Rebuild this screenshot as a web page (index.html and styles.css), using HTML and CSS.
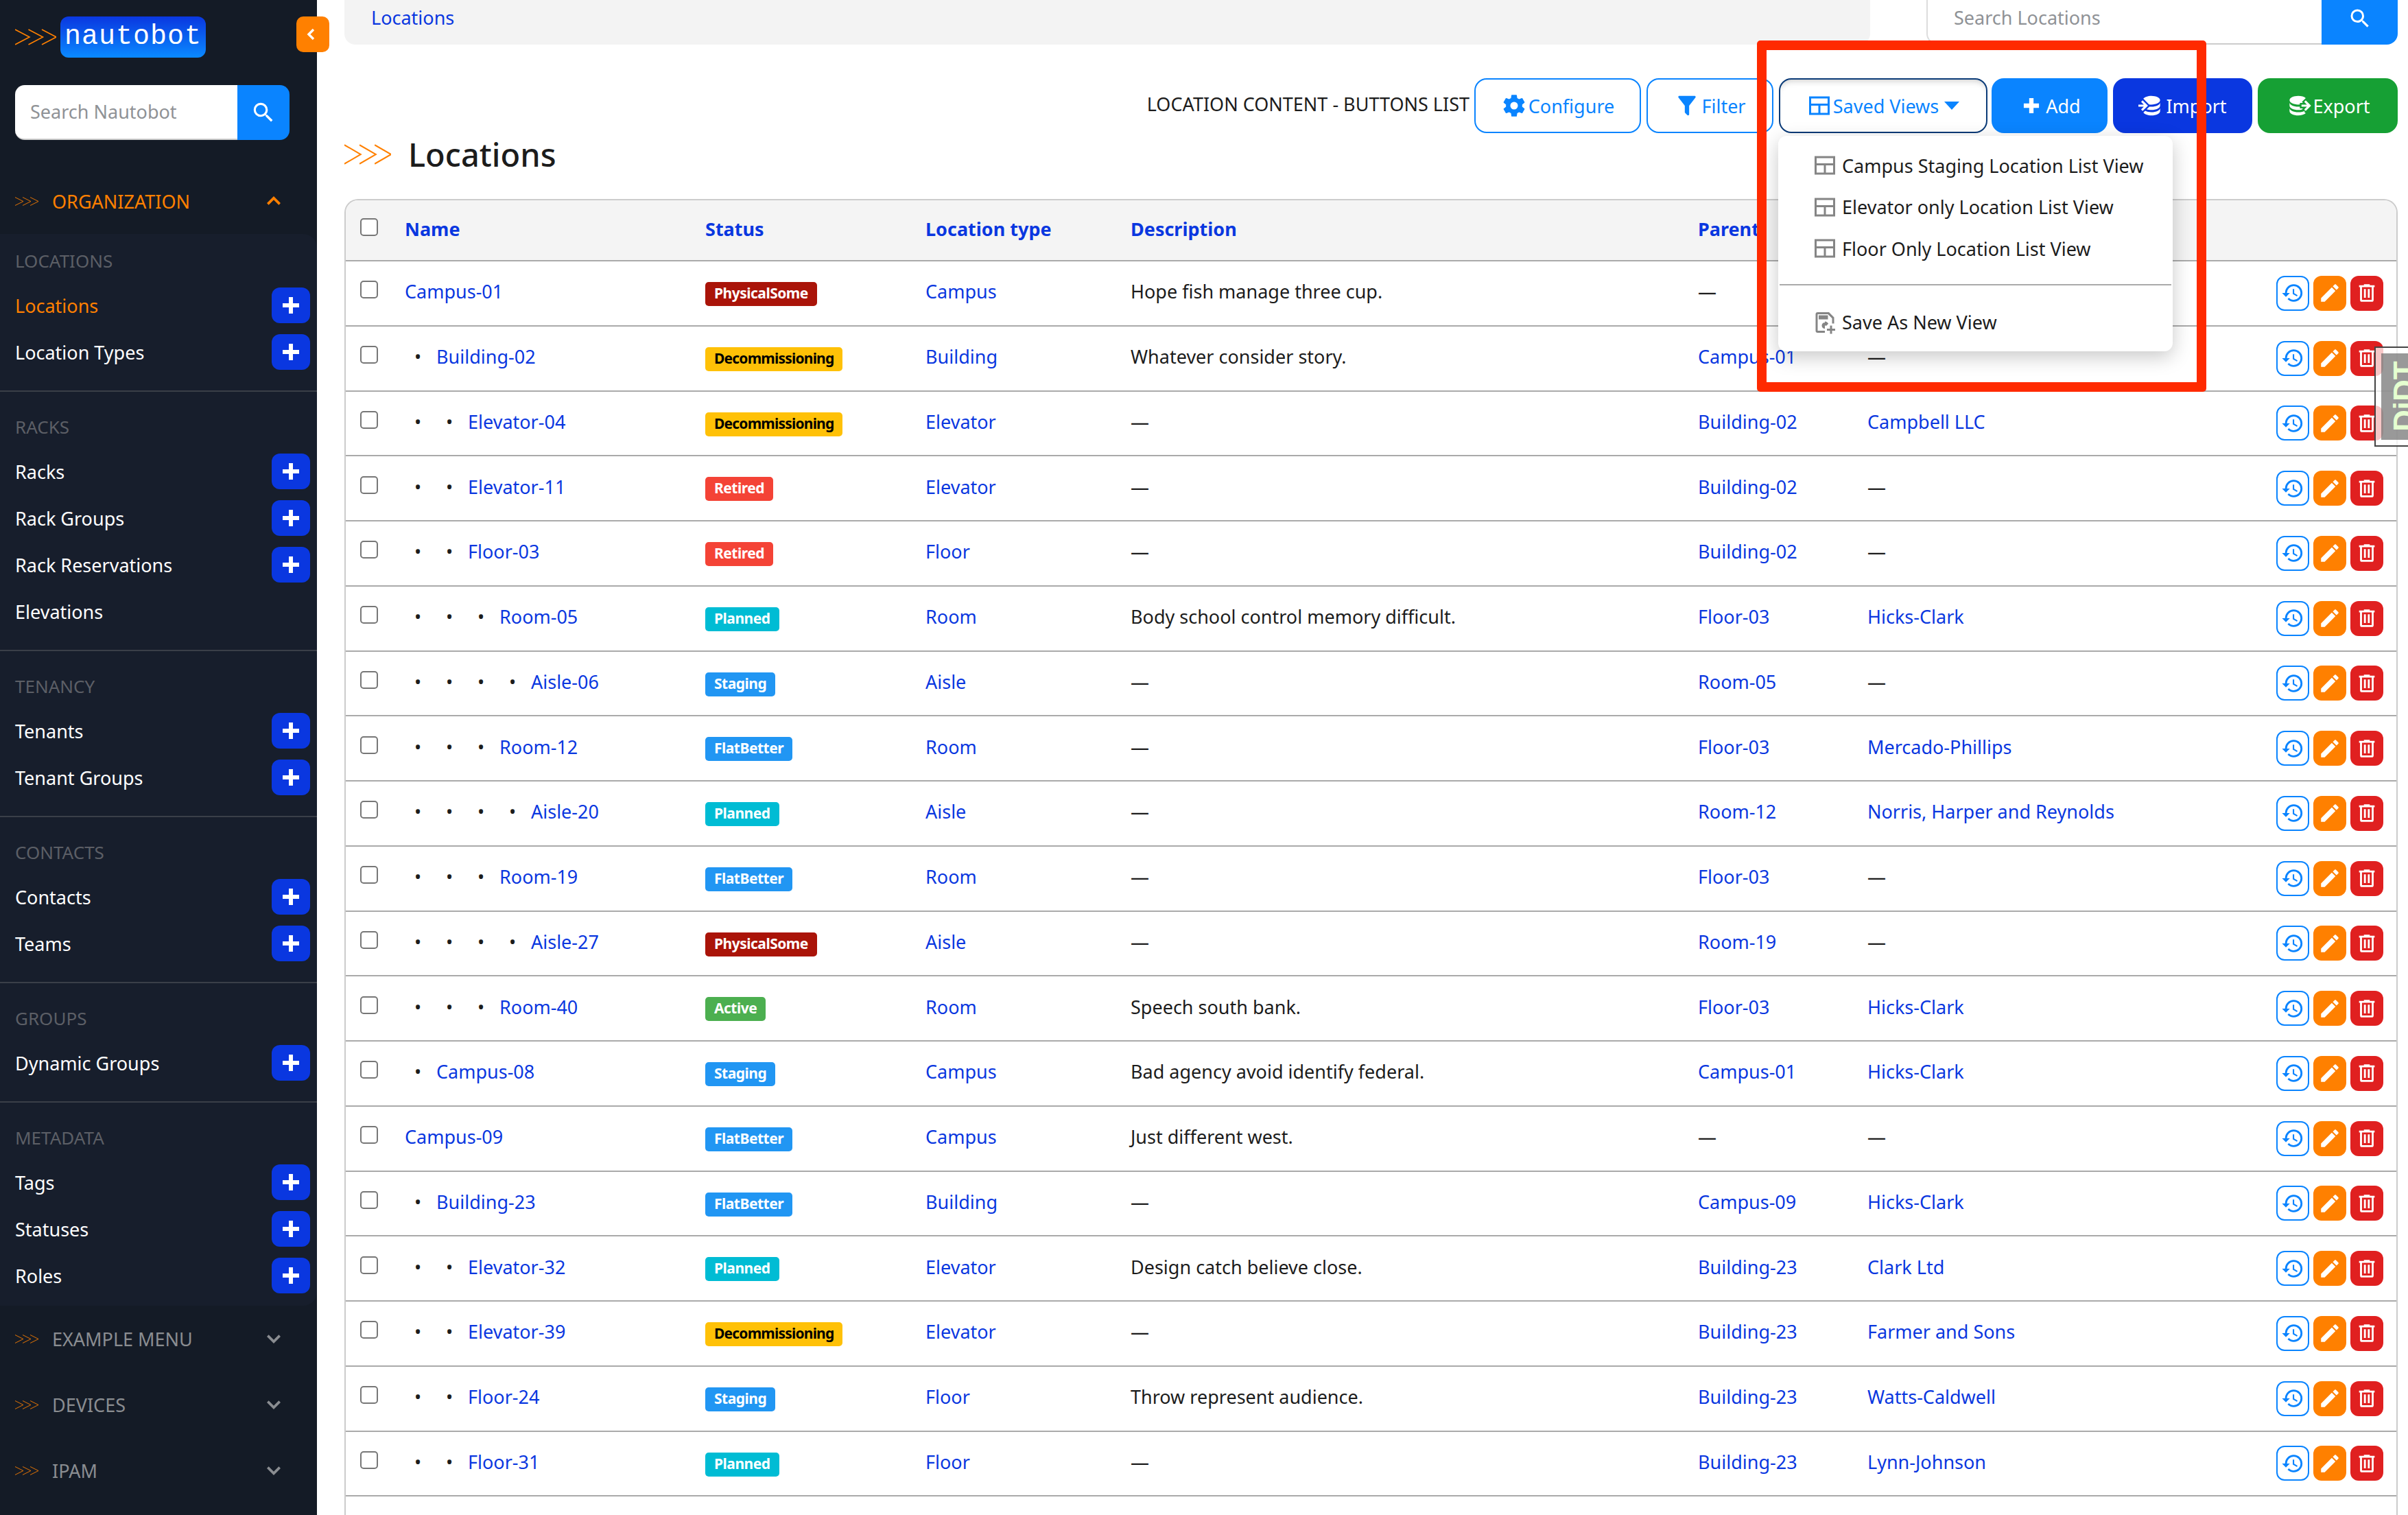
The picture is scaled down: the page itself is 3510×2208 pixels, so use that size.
FILE: index.html
```html
<!DOCTYPE html>
<html lang="en">
<head>
<meta charset="UTF-8">
<title>Locations - Nautobot</title>
<link rel="stylesheet" href="styles.css">
</head>
<body>
<svg class="defs" width="0" height="0">
  <symbol id="i-chev" viewBox="0 0 60 24" preserveAspectRatio="none"><path d="M0 1 21 12 0 23M19.5 1 40.5 12 19.5 23M39 1 60 12 39 23" fill="none" stroke="currentColor" stroke-width="1.6"/></symbol>
  <symbol id="i-plus" viewBox="0 0 24 24"><path d="M20 14H14V20H10V14H4V10H10V4H14V10H20V14Z"/></symbol>
  <symbol id="i-plain-plus" viewBox="0 0 24 24"><path d="M19 14H14V19H10V14H5V10H10V5H14V10H19V14Z"/></symbol>
  <symbol id="i-search" viewBox="0 0 24 24"><path d="M9.5 3A6.5 6.5 0 0 1 16 9.5C16 11.11 15.41 12.59 14.44 13.73L14.71 14H15.5L20.5 19L19 20.5L14 15.5V14.71L13.73 14.44C12.59 15.41 11.11 16 9.5 16A6.5 6.5 0 0 1 3 9.5A6.5 6.5 0 0 1 9.5 3M9.5 5C7 5 5 7 5 9.5S7 14 9.5 14 14 12 14 9.5 12 5 9.5 5Z"/></symbol>
  <symbol id="i-history" viewBox="0 0 24 24"><path d="M13.5,8H12V13L16.28,15.54L17,14.33L13.5,12.25V8M13,3A9,9 0 0,0 4,12H1L4.96,16.03L9,12H6A7,7 0 0,1 13,5A7,7 0 0,1 20,12A7,7 0 0,1 13,19C11.07,19 9.32,18.21 8.06,16.94L6.64,18.36C8.27,20 10.5,21 13,21A9,9 0 0,0 22,12A9,9 0 0,0 13,3"/></symbol>
  <symbol id="i-pencil" viewBox="0 0 24 24"><path d="M20.71,7.04C21.1,6.65 21.1,6 20.71,5.63L18.37,3.29C18,2.9 17.35,2.9 16.96,3.29L15.12,5.12L18.87,8.87M3,17.25V21H6.75L17.81,9.93L14.06,6.18L3,17.25Z"/></symbol>
  <symbol id="i-trash" viewBox="0 0 24 24"><path d="M9,3V4H4V6H5V19A2,2 0 0,0 7,21H17A2,2 0 0,0 19,19V6H20V4H15V3H9M7,6H17V19H7V6M9,8V17H11V8H9M13,8V17H15V8H13Z"/></symbol>
  <symbol id="i-cog" viewBox="0 0 24 24"><path d="M12,15.5A3.5,3.5 0 0,1 8.5,12A3.5,3.5 0 0,1 12,8.5A3.5,3.5 0 0,1 15.5,12A3.5,3.5 0 0,1 12,15.5M19.43,12.97C19.47,12.65 19.5,12.33 19.5,12C19.5,11.67 19.47,11.34 19.43,11L21.54,9.37C21.73,9.22 21.78,8.95 21.66,8.73L19.66,5.27C19.54,5.05 19.27,4.96 19.05,5.05L16.56,6.05C16.04,5.66 15.5,5.32 14.87,5.07L14.5,2.42C14.46,2.18 14.25,2 14,2H10C9.75,2 9.54,2.18 9.5,2.42L9.13,5.07C8.5,5.32 7.96,5.66 7.44,6.05L4.95,5.05C4.73,4.96 4.46,5.05 4.34,5.27L2.34,8.73C2.21,8.95 2.27,9.22 2.46,9.37L4.57,11C4.53,11.34 4.5,11.67 4.5,12C4.5,12.33 4.53,12.65 4.57,12.97L2.46,14.63C2.27,14.78 2.21,15.05 2.34,15.27L4.34,18.73C4.46,18.95 4.73,19.03 4.95,18.95L7.44,17.94C7.96,18.34 8.5,18.68 9.13,18.93L9.5,21.58C9.54,21.82 9.75,22 10,22H14C14.25,22 14.46,21.82 14.5,21.58L14.87,18.93C15.5,18.67 16.04,18.34 16.56,17.94L19.05,18.95C19.27,19.03 19.54,18.95 19.66,18.73L21.66,15.27C21.78,15.05 21.73,14.78 21.54,14.63L19.43,12.97Z"/></symbol>
  <symbol id="i-filter" viewBox="0 0 24 24"><path d="M14,12V19.88C14.04,20.18 13.94,20.5 13.71,20.71C13.32,21.1 12.69,21.1 12.3,20.71L10.29,18.7C10.06,18.47 9.96,18.16 10,17.87V12H9.97L4.21,4.62C3.87,4.19 3.95,3.56 4.38,3.22C4.57,3.08 4.78,3 5,3H19C19.22,3 19.43,3.08 19.62,3.22C20.05,3.56 20.13,4.19 19.79,4.62L14.03,12H14Z"/></symbol>
  <symbol id="i-table" viewBox="0 0 24 24"><path d="M2 3H22V21H2V3M4 5V10H20V5H4M4 12V19H11V12H4M13 12V19H20V12H13Z"/></symbol>
  <symbol id="i-import" viewBox="0 0 24 24"><path d="M12,3C8.59,3 5.69,4.07 4.54,5.57L9.79,10.82C10.5,10.93 11.22,11 12,11C16.42,11 20,9.21 20,7C20,4.79 16.42,3 12,3M3.92,7.08L2.5,8.5L5,11H0V13H5L2.5,15.5L3.92,16.92L8.84,12M20,9C20,11.21 16.42,13 12,13C11.34,13 10.7,12.95 10.09,12.87L7.62,15.34C8.88,15.75 10.38,16 12,16C16.42,16 20,14.21 20,12M20,14C20,16.21 16.42,18 12,18C9.72,18 7.67,17.5 6.21,16.75L4.63,18.33C5.72,19.89 8.6,21 12,21C16.42,21 20,19.21 20,17"/></symbol>
  <symbol id="i-export" viewBox="0 0 24 24"><path d="M12,3C7.58,3 4,4.79 4,7C4,9.21 7.58,11 12,11C12.5,11 13,10.97 13.5,10.92V9.5H16.39L15.39,8.5L18.9,5C17.5,3.8 14.94,3 12,3M18.92,7.08L17.5,8.5L20,11H15V13H20L17.5,15.5L18.92,16.92L23.84,12M4,9V12C4,14.21 7.58,16 12,16C13.17,16 14.26,15.85 15.25,15.62L16.38,14.5H13.5V12.92C13,12.97 12.5,13 12,13C7.58,13 4,11.21 4,9M4,14V17C4,19.21 7.58,21 12,21C14.94,21 17.5,20.2 18.9,19L17.5,17.61L18.3,16.5C16.9,17.5 14.6,18 12,18C7.58,18 4,16.21 4,14Z"/></symbol>
  <symbol id="i-save" viewBox="0 0 24 24"><path d="M5 2H16L21 7V13H19V8L15 4H5V20H12V22H5A2 2 0 0 1 3 20V4A2 2 0 0 1 5 2M6 5H15V9H6V5M12 11A4 4 0 0 1 15.4 13.2L13.5 15.2A2 2 0 0 0 12 15V11M9 15A3 3 0 0 1 12 12V18A3 3 0 0 1 9 15M17 15H19V18H22V20H19V23H17V20H14V18H17V15Z"/></symbol>
</svg>

<aside class="sidebar">
  <div class="brand">
    <svg class="brand-chev"><use href="#i-chev"/></svg>
    <span class="logo">nautobot</span>
  </div>
  <a class="collapse"><svg viewBox="0 0 24 24"><path d="M15 5 8 12l7 7" fill="none" stroke="#fff" stroke-width="3.4"/></svg></a>
  <div class="side-search">
    <span class="side-search-input">Search Nautobot</span>
    <span class="side-search-btn"><svg><use href="#i-search"/></svg></span>
  </div>

  <div class="menu-head open">
    <svg class="menu-chev"><use href="#i-chev"/></svg>
    <span>ORGANIZATION</span>
    <svg class="caret" viewBox="0 0 24 24"><path d="M4 16 12 8l8 8" fill="none" stroke="currentColor" stroke-width="3.4"/></svg>
  </div>
  <div class="submenu">
    <section class="group">
      <h6>LOCATIONS</h6>
      <div class="item current">Locations<a class="add"><svg><use href="#i-plus"/></svg></a></div>
      <div class="item">Location Types<a class="add"><svg><use href="#i-plus"/></svg></a></div>
    </section>
    <section class="group">
      <h6>RACKS</h6>
      <div class="item">Racks<a class="add"><svg><use href="#i-plus"/></svg></a></div>
      <div class="item">Rack Groups<a class="add"><svg><use href="#i-plus"/></svg></a></div>
      <div class="item">Rack Reservations<a class="add"><svg><use href="#i-plus"/></svg></a></div>
      <div class="item">Elevations</div>
    </section>
    <section class="group">
      <h6>TENANCY</h6>
      <div class="item">Tenants<a class="add"><svg><use href="#i-plus"/></svg></a></div>
      <div class="item">Tenant Groups<a class="add"><svg><use href="#i-plus"/></svg></a></div>
    </section>
    <section class="group">
      <h6>CONTACTS</h6>
      <div class="item">Contacts<a class="add"><svg><use href="#i-plus"/></svg></a></div>
      <div class="item">Teams<a class="add"><svg><use href="#i-plus"/></svg></a></div>
    </section>
    <section class="group">
      <h6>GROUPS</h6>
      <div class="item">Dynamic Groups<a class="add"><svg><use href="#i-plus"/></svg></a></div>
    </section>
    <section class="group">
      <h6>METADATA</h6>
      <div class="item">Tags<a class="add"><svg><use href="#i-plus"/></svg></a></div>
      <div class="item">Statuses<a class="add"><svg><use href="#i-plus"/></svg></a></div>
      <div class="item">Roles<a class="add"><svg><use href="#i-plus"/></svg></a></div>
    </section>
  </div>
  <div class="menu-head">
    <svg class="menu-chev"><use href="#i-chev"/></svg>
    <span>EXAMPLE MENU</span>
    <svg class="caret" viewBox="0 0 24 24"><path d="M4 8l8 8 8-8" fill="none" stroke="currentColor" stroke-width="3.4"/></svg>
  </div>
  <div class="menu-head">
    <svg class="menu-chev"><use href="#i-chev"/></svg>
    <span>DEVICES</span>
    <svg class="caret" viewBox="0 0 24 24"><path d="M4 8l8 8 8-8" fill="none" stroke="currentColor" stroke-width="3.4"/></svg>
  </div>
  <div class="menu-head">
    <svg class="menu-chev"><use href="#i-chev"/></svg>
    <span>IPAM</span>
    <svg class="caret" viewBox="0 0 24 24"><path d="M4 8l8 8 8-8" fill="none" stroke="currentColor" stroke-width="3.4"/></svg>
  </div>
</aside>

<main class="main">
  <div class="topbar">
    <div class="crumbs"><a>Locations</a></div>
    <div class="top-search">
      <span class="top-search-input">Search Locations</span>
      <span class="top-search-btn"><svg><use href="#i-search"/></svg></span>
    </div>
  </div>

  <div class="toolbar">
    <span class="toolbar-label">LOCATION CONTENT - BUTTONS LIST</span>
    <a class="btn outline w-configure"><svg><use href="#i-cog"/></svg>Configure</a>
    <a class="btn outline w-filter"><svg><use href="#i-filter"/></svg>Filter</a>
    <a class="btn outline selected w-saved"><svg class="small"><use href="#i-table"/></svg>Saved Views<i class="tri"></i></a>
    <a class="btn blue w-add"><svg><use href="#i-plain-plus"/></svg>Add</a>
    <a class="btn navy w-import"><svg><use href="#i-import"/></svg>Import</a>
    <a class="btn green w-export"><svg><use href="#i-export"/></svg>Export</a>
  </div>

  <h1 class="title"><svg><use href="#i-chev"/></svg>Locations</h1>

  <div class="table-wrap">
    <table class="list">
      <colgroup><col class="c-check"><col class="c-name"><col class="c-status"><col class="c-type"><col class="c-desc"><col class="c-parent"><col class="c-tenant"><col></colgroup>
      <thead>
        <tr><th class="check"><i class="box"></i></th><th>Name</th><th>Status</th><th>Location type</th><th>Description</th><th>Parent</th><th></th><th></th></tr>
      </thead>
      <tbody>
        <tr><td class="check"><i class="box"></i></td><td><a>Campus-01</a></td><td class="st"><span class="badge physical">PhysicalSome</span></td><td><a>Campus</a></td><td>Hope fish manage three cup.</td><td>—</td><td></td><td class="acts"><a class="act hist"><svg><use href="#i-history"/></svg></a><a class="act edit"><svg><use href="#i-pencil"/></svg></a><a class="act del"><svg><use href="#i-trash"/></svg></a></td></tr>
        <tr><td class="check"><i class="box"></i></td><td><span class="dot">•</span><a>Building-02</a></td><td class="st"><span class="badge decom">Decommissioning</span></td><td><a>Building</a></td><td>Whatever consider story.</td><td><a>Campus-01</a></td><td>—</td><td class="acts"><a class="act hist"><svg><use href="#i-history"/></svg></a><a class="act edit"><svg><use href="#i-pencil"/></svg></a><a class="act del"><svg><use href="#i-trash"/></svg></a></td></tr>
        <tr><td class="check"><i class="box"></i></td><td><span class="dot">•</span><span class="dot">•</span><a>Elevator-04</a></td><td class="st"><span class="badge decom">Decommissioning</span></td><td><a>Elevator</a></td><td>—</td><td><a>Building-02</a></td><td><a>Campbell LLC</a></td><td class="acts"><a class="act hist"><svg><use href="#i-history"/></svg></a><a class="act edit"><svg><use href="#i-pencil"/></svg></a><a class="act del"><svg><use href="#i-trash"/></svg></a></td></tr>
        <tr><td class="check"><i class="box"></i></td><td><span class="dot">•</span><span class="dot">•</span><a>Elevator-11</a></td><td class="st"><span class="badge retired">Retired</span></td><td><a>Elevator</a></td><td>—</td><td><a>Building-02</a></td><td>—</td><td class="acts"><a class="act hist"><svg><use href="#i-history"/></svg></a><a class="act edit"><svg><use href="#i-pencil"/></svg></a><a class="act del"><svg><use href="#i-trash"/></svg></a></td></tr>
        <tr><td class="check"><i class="box"></i></td><td><span class="dot">•</span><span class="dot">•</span><a>Floor-03</a></td><td class="st"><span class="badge retired">Retired</span></td><td><a>Floor</a></td><td>—</td><td><a>Building-02</a></td><td>—</td><td class="acts"><a class="act hist"><svg><use href="#i-history"/></svg></a><a class="act edit"><svg><use href="#i-pencil"/></svg></a><a class="act del"><svg><use href="#i-trash"/></svg></a></td></tr>
        <tr><td class="check"><i class="box"></i></td><td><span class="dot">•</span><span class="dot">•</span><span class="dot">•</span><a>Room-05</a></td><td class="st"><span class="badge planned">Planned</span></td><td><a>Room</a></td><td>Body school control memory difficult.</td><td><a>Floor-03</a></td><td><a>Hicks-Clark</a></td><td class="acts"><a class="act hist"><svg><use href="#i-history"/></svg></a><a class="act edit"><svg><use href="#i-pencil"/></svg></a><a class="act del"><svg><use href="#i-trash"/></svg></a></td></tr>
        <tr><td class="check"><i class="box"></i></td><td><span class="dot">•</span><span class="dot">•</span><span class="dot">•</span><span class="dot">•</span><a>Aisle-06</a></td><td class="st"><span class="badge staging">Staging</span></td><td><a>Aisle</a></td><td>—</td><td><a>Room-05</a></td><td>—</td><td class="acts"><a class="act hist"><svg><use href="#i-history"/></svg></a><a class="act edit"><svg><use href="#i-pencil"/></svg></a><a class="act del"><svg><use href="#i-trash"/></svg></a></td></tr>
        <tr><td class="check"><i class="box"></i></td><td><span class="dot">•</span><span class="dot">•</span><span class="dot">•</span><a>Room-12</a></td><td class="st"><span class="badge flat">FlatBetter</span></td><td><a>Room</a></td><td>—</td><td><a>Floor-03</a></td><td><a>Mercado-Phillips</a></td><td class="acts"><a class="act hist"><svg><use href="#i-history"/></svg></a><a class="act edit"><svg><use href="#i-pencil"/></svg></a><a class="act del"><svg><use href="#i-trash"/></svg></a></td></tr>
        <tr><td class="check"><i class="box"></i></td><td><span class="dot">•</span><span class="dot">•</span><span class="dot">•</span><span class="dot">•</span><a>Aisle-20</a></td><td class="st"><span class="badge planned">Planned</span></td><td><a>Aisle</a></td><td>—</td><td><a>Room-12</a></td><td><a>Norris, Harper and Reynolds</a></td><td class="acts"><a class="act hist"><svg><use href="#i-history"/></svg></a><a class="act edit"><svg><use href="#i-pencil"/></svg></a><a class="act del"><svg><use href="#i-trash"/></svg></a></td></tr>
        <tr><td class="check"><i class="box"></i></td><td><span class="dot">•</span><span class="dot">•</span><span class="dot">•</span><a>Room-19</a></td><td class="st"><span class="badge flat">FlatBetter</span></td><td><a>Room</a></td><td>—</td><td><a>Floor-03</a></td><td>—</td><td class="acts"><a class="act hist"><svg><use href="#i-history"/></svg></a><a class="act edit"><svg><use href="#i-pencil"/></svg></a><a class="act del"><svg><use href="#i-trash"/></svg></a></td></tr>
        <tr><td class="check"><i class="box"></i></td><td><span class="dot">•</span><span class="dot">•</span><span class="dot">•</span><span class="dot">•</span><a>Aisle-27</a></td><td class="st"><span class="badge physical">PhysicalSome</span></td><td><a>Aisle</a></td><td>—</td><td><a>Room-19</a></td><td>—</td><td class="acts"><a class="act hist"><svg><use href="#i-history"/></svg></a><a class="act edit"><svg><use href="#i-pencil"/></svg></a><a class="act del"><svg><use href="#i-trash"/></svg></a></td></tr>
        <tr><td class="check"><i class="box"></i></td><td><span class="dot">•</span><span class="dot">•</span><span class="dot">•</span><a>Room-40</a></td><td class="st"><span class="badge active">Active</span></td><td><a>Room</a></td><td>Speech south bank.</td><td><a>Floor-03</a></td><td><a>Hicks-Clark</a></td><td class="acts"><a class="act hist"><svg><use href="#i-history"/></svg></a><a class="act edit"><svg><use href="#i-pencil"/></svg></a><a class="act del"><svg><use href="#i-trash"/></svg></a></td></tr>
        <tr><td class="check"><i class="box"></i></td><td><span class="dot">•</span><a>Campus-08</a></td><td class="st"><span class="badge staging">Staging</span></td><td><a>Campus</a></td><td>Bad agency avoid identify federal.</td><td><a>Campus-01</a></td><td><a>Hicks-Clark</a></td><td class="acts"><a class="act hist"><svg><use href="#i-history"/></svg></a><a class="act edit"><svg><use href="#i-pencil"/></svg></a><a class="act del"><svg><use href="#i-trash"/></svg></a></td></tr>
        <tr><td class="check"><i class="box"></i></td><td><a>Campus-09</a></td><td class="st"><span class="badge flat">FlatBetter</span></td><td><a>Campus</a></td><td>Just different west.</td><td>—</td><td>—</td><td class="acts"><a class="act hist"><svg><use href="#i-history"/></svg></a><a class="act edit"><svg><use href="#i-pencil"/></svg></a><a class="act del"><svg><use href="#i-trash"/></svg></a></td></tr>
        <tr><td class="check"><i class="box"></i></td><td><span class="dot">•</span><a>Building-23</a></td><td class="st"><span class="badge flat">FlatBetter</span></td><td><a>Building</a></td><td>—</td><td><a>Campus-09</a></td><td><a>Hicks-Clark</a></td><td class="acts"><a class="act hist"><svg><use href="#i-history"/></svg></a><a class="act edit"><svg><use href="#i-pencil"/></svg></a><a class="act del"><svg><use href="#i-trash"/></svg></a></td></tr>
        <tr><td class="check"><i class="box"></i></td><td><span class="dot">•</span><span class="dot">•</span><a>Elevator-32</a></td><td class="st"><span class="badge planned">Planned</span></td><td><a>Elevator</a></td><td>Design catch believe close.</td><td><a>Building-23</a></td><td><a>Clark Ltd</a></td><td class="acts"><a class="act hist"><svg><use href="#i-history"/></svg></a><a class="act edit"><svg><use href="#i-pencil"/></svg></a><a class="act del"><svg><use href="#i-trash"/></svg></a></td></tr>
        <tr><td class="check"><i class="box"></i></td><td><span class="dot">•</span><span class="dot">•</span><a>Elevator-39</a></td><td class="st"><span class="badge decom">Decommissioning</span></td><td><a>Elevator</a></td><td>—</td><td><a>Building-23</a></td><td><a>Farmer and Sons</a></td><td class="acts"><a class="act hist"><svg><use href="#i-history"/></svg></a><a class="act edit"><svg><use href="#i-pencil"/></svg></a><a class="act del"><svg><use href="#i-trash"/></svg></a></td></tr>
        <tr><td class="check"><i class="box"></i></td><td><span class="dot">•</span><span class="dot">•</span><a>Floor-24</a></td><td class="st"><span class="badge staging">Staging</span></td><td><a>Floor</a></td><td>Throw represent audience.</td><td><a>Building-23</a></td><td><a>Watts-Caldwell</a></td><td class="acts"><a class="act hist"><svg><use href="#i-history"/></svg></a><a class="act edit"><svg><use href="#i-pencil"/></svg></a><a class="act del"><svg><use href="#i-trash"/></svg></a></td></tr>
        <tr><td class="check"><i class="box"></i></td><td><span class="dot">•</span><span class="dot">•</span><a>Floor-31</a></td><td class="st"><span class="badge planned">Planned</span></td><td><a>Floor</a></td><td>—</td><td><a>Building-23</a></td><td><a>Lynn-Johnson</a></td><td class="acts"><a class="act hist"><svg><use href="#i-history"/></svg></a><a class="act edit"><svg><use href="#i-pencil"/></svg></a><a class="act del"><svg><use href="#i-trash"/></svg></a></td></tr>
        <tr><td colspan="8"></td></tr>
      </tbody>
    </table>
  </div>
</main>

<div class="dropdown">
  <a class="drop-item"><svg><use href="#i-table"/></svg>Campus Staging Location List View</a>
  <a class="drop-item"><svg><use href="#i-table"/></svg>Elevator only Location List View</a>
  <a class="drop-item"><svg><use href="#i-table"/></svg>Floor Only Location List View</a>
  <hr>
  <a class="drop-item"><svg><use href="#i-save"/></svg>Save As New View</a>
</div>
<div class="annotation"></div>
<div class="djdt"><span>DjDT</span></div>
</body>
</html>
```

FILE: styles.css
```css
* { box-sizing: border-box; }
html, body { height: 100%; }
body { margin: 0; display: flex; height: 2208px; overflow: hidden; position: relative; background: #fff; color: #1c1c1c; font-family: "Noto Sans", "Open Sans", sans-serif; font-size: 27px; }
a { color: #0a37e0; text-decoration: none; }
svg { fill: currentColor; }
.defs { position: absolute; }

/* sidebar */
.sidebar { width: 462px; height: 2208px; flex: none; background: #141b26; color: #fff; }
.brand { display: flex; align-items: center; height: 60px; margin: 24px 0 0 22px; }
.brand-chev { width: 60px; height: 24px; color: #ff8000; margin-right: 6px; }
.logo { width: 212px; height: 60px; border-radius: 12px; background: linear-gradient(#0a37e0, #0a8aff); color: #fff; text-align: center; font-family: "Liberation Mono", monospace; font-size: 40px; letter-spacing: 1px; line-height: 60px; }
.collapse { position: absolute; left: 432px; top: 24px; width: 48px; height: 52px; border-radius: 10px; background: #ff8000; display: flex; align-items: center; justify-content: center; }
.collapse svg { width: 24px; height: 24px; margin-left: -4px; }
.side-search { display: flex; width: 400px; height: 80px; margin: 40px 0 0 22px; }
.side-search-input { flex: 1; background: #fff; border-radius: 14px 0 0 14px; border-bottom: 2px solid #ccc; padding-left: 22px; line-height: 78px; color: #8f9296; }
.side-search-btn { width: 76px; background: #0a84ff; border-radius: 0 14px 14px 0; display: flex; align-items: center; justify-content: center; }
.side-search-btn svg { width: 38px; height: 38px; }
.menu-head { display: flex; align-items: center; height: 96px; padding: 0 50px 0 22px; color: #8a8d91; }
.menu-head span { flex: 1; }
.menu-head.open { height: 137px; padding-top: 41px; color: #ff8000; }
.menu-chev { width: 34px; height: 13px; color: #ff8000; margin-right: 20px; }
.caret { width: 26px; height: 26px; }
.submenu { height: 1562px; background: #171e2c; border-radius: 0 20px 20px 0; }
.group { border-bottom: 2px solid #3a3f48; padding: 34px 5px 22px 22px; }
.group:first-child { padding-top: 22px; }
.group:last-child { border-bottom: 0; }
.group h6 { margin: 0; height: 48px; font-size: 26px; line-height: 34px; font-weight: 400; color: #5c5f66; }
.item { display: flex; align-items: center; justify-content: space-between; height: 68px; padding-right: 5px; }
.item.current { color: #ff8000; }
.add { width: 56px; height: 52px; border-radius: 12px; background: #0a37e0; color: #fff; display: flex; align-items: center; justify-content: center; }
.add svg { width: 36px; height: 36px; }

/* main column */
.main { flex: 1; min-width: 0; padding: 0 15px 0 40px; }
.topbar { display: flex; height: 65px; }
.crumbs { flex: 1; background: #f3f3f3; border-radius: 0 0 16px 16px; padding-left: 39px; line-height: 52px; }
.top-search { display: flex; width: 687px; margin-left: 82px; }
.top-search-input { flex: 1; border: 2px solid #ddd; border-top: 0; border-right: 0; border-radius: 0 0 0 16px; border-bottom-color: #ccc; padding-left: 38px; line-height: 52px; color: #8f9296; }
.top-search-btn { width: 111px; background: #0a84ff; color: #fff; border-radius: 0 0 16px 0; display: flex; align-items: center; justify-content: center; padding-bottom: 12px; }
.top-search-btn svg { width: 36px; height: 36px; }

.toolbar { display: flex; align-items: center; justify-content: flex-end; height: 80px; margin-top: 49px; gap: 8px; }
.toolbar-label { margin-right: -1px; padding-bottom: 6px; }
.btn { display: flex; align-items: center; justify-content: center; height: 80px; border-radius: 18px; color: #fff; white-space: nowrap; }
.btn svg { width: 38px; height: 38px; margin-right: 2px; }
.btn svg.small { width: 36px; height: 36px; }
.outline { border: 2px solid #0a84ff; color: #0a84ff; background: #fff; }
.selected { border-color: #0b3b78; box-shadow: inset 0 8px 10px -6px #ccc; margin-right: -2px; }
.blue { background: #0a84ff; }
.navy { background: #0a37e0; }
.green { background: #16a034; }
.w-configure { width: 243px; }
.w-filter { width: 185px; }
.w-saved { width: 304px; }
.w-add { width: 169px; }
.w-import { width: 203px; }
.w-export { width: 204px; }
.tri { width: 0; height: 0; margin-left: 8px; border: 11px solid transparent; border-top: 12px solid currentColor; border-bottom: 0; }

.title { display: flex; align-items: center; height: 62px; margin: 0 0 34px; font-size: 47px; line-height: 62px; font-weight: 500; }
.title svg { width: 68px; height: 30px; color: #ff8000; margin-right: 25px; }

/* table */
.table-wrap { border: 2px solid #ccc; border-bottom: 0; border-radius: 20px 20px 0 0; overflow: hidden; height: 1918px; }
.list { width: 100%; border-collapse: collapse; table-layout: fixed; }
.c-check { width: 86px; }
.c-name { width: 438px; }
.c-status { width: 321px; }
.c-type { width: 299px; }
.c-desc { width: 827px; }
.c-parent { width: 247px; }
.c-tenant { width: 580px; }
.list th { height: 88px; background: #f4f4f4; color: #0a37e0; text-align: left; font-weight: 700; padding: 0 0 4px; border-bottom: 2px solid #aaa; }
.list td { height: 94.76px; padding: 0 0 5px; border-bottom: 2px solid #aaa; white-space: nowrap; }
.list td.st { padding-bottom: 2px; }
.list td.acts { padding-bottom: 0; }
.list .check { padding: 0 0 10px 21px; }
.box { display: block; width: 26px; height: 26px; border: 2px solid #777; border-radius: 5px; background: #fff; }
.dot { display: inline-block; width: 46px; padding-left: 14px; }
.badge { display: inline-block; height: 35px; padding: 0 13px; border-radius: 5px; color: #fff; font-size: 21px; font-weight: 700; line-height: 33px; letter-spacing: -0.5px; vertical-align: middle; }
.physical { background: #aa1409; }
.decom { background: #ffc107; color: #000; letter-spacing: -0.8px; }
.retired { background: #f44336; }
.planned { background: #00bcd4; }
.staging { background: #2196f3; }
.flat { background: #2196f3; }
.active { background: #4caf50; }
.list td.acts { text-align: right; padding-right: 19px; }
.acts { font-size: 0; }
.act { display: inline-flex; align-items: center; justify-content: center; width: 48px; height: 51px; border-radius: 12px; margin-left: 6px; color: #fff; vertical-align: middle; }
.act svg { width: 34px; height: 34px; }
.hist { border: 2px solid #0a84ff; color: #0a84ff; background: #fff; }
.edit { background: #ff8000; }
.del { background: #e02020; }

/* saved views menu, open */
.dropdown { position: absolute; left: 2592px; top: 198px; width: 575px; height: 314px; padding-top: 13px; background: #fff; border-radius: 12px; box-shadow: 0 8px 28px rgba(0, 0, 0, .22); }
.drop-item { display: flex; align-items: center; height: 60.5px; padding-left: 50px; color: #1c1c1c; white-space: nowrap; }
.drop-item svg { width: 36px; height: 36px; margin-right: 7px; color: #858585; flex: none; }
.dropdown hr { margin: 21px 2px 24px; border: 0; border-top: 2px solid #aaa; }

/* screenshot markup + debug toolbar handle */
.annotation { position: absolute; left: 2561px; top: 59px; width: 655px; height: 512px; border: 14px solid #ff2a00; border-radius: 5px; }
.djdt { position: absolute; left: 3461px; top: 505px; width: 80px; height: 146px; border: 2px solid #444; background: rgba(255, 255, 255, .75); padding: 8px 0 8px 8px; }
.djdt span { display: block; height: 100%; padding-right: 8px; background: rgba(110, 110, 110, .7); color: #e5ffd0; font-family: "Liberation Sans", sans-serif; font-size: 44px; font-weight: 700; line-height: 52px; text-align: center; writing-mode: vertical-rl; transform: rotate(180deg); }
```
